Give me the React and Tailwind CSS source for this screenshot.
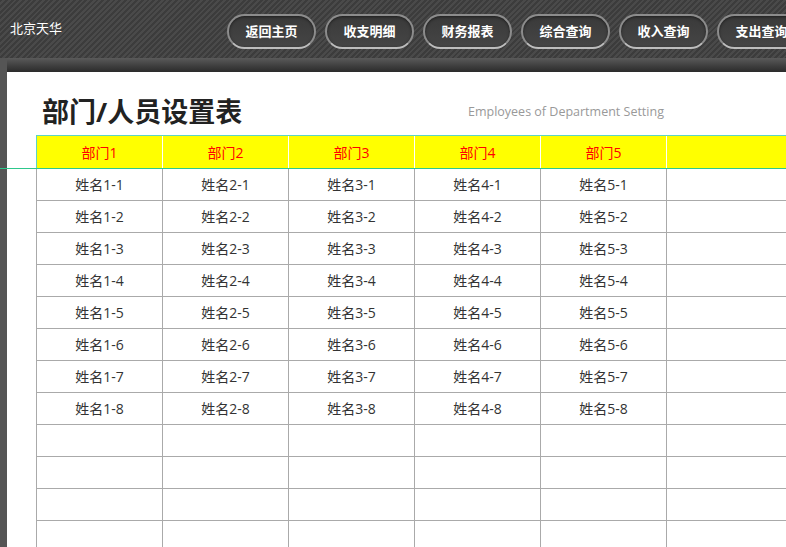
import React from "react";

const navItems = ["返回主页", "收支明细", "财务报表", "综合查询", "收入查询", "支出查询"];
const depts = ["部门1", "部门2", "部门3", "部门4", "部门5", ""];

const App = () => {
  const rows = [];
  for (let r = 1; r <= 12; r++) {
    rows.push(
      depts.map((d, i) => (r <= 8 && i < 5 ? `姓名${i + 1}-${r}` : ""))
    );
  }

  return (
    <div className="relative w-[786px] h-[547px] overflow-hidden bg-white font-['Open_Sans','Noto_Sans_CJK_SC',sans-serif]">
      {/* Top header */}
      <div className="h-[58px] flex items-start bg-[repeating-linear-gradient(135deg,#3c3c3c_0px,#3c3c3c_2px,#4a4a4a_2px,#4a4a4a_4px)]">
        <div className="w-[227px] shrink-0 pl-[10px] pt-[19px] text-[13px] leading-[18px] text-white">
          北京天华
        </div>
        <div className="flex gap-[9px] pt-[14px]">
          {navItems.map((item) => (
            <div
              key={item}
              className="w-[89px] h-[35px] shrink-0 rounded-full border-2 border-[#8c8c8c] border-b-[#bdbdbd] bg-gradient-to-b from-[#3a3a3a] to-[#454545] shadow-[inset_0_1px_3px_rgba(0,0,0,0.5)] flex items-center justify-center text-[13px] font-bold text-white"
            >
              {item}
            </div>
          ))}
        </div>
      </div>

      <div className="flex h-[489px] overflow-hidden">
        {/* left strip */}
        <div className="w-[7px] shrink-0 bg-[#555555]" />
        <div className="flex-1 flex flex-col">
          {/* dark bar */}
          <div className="h-[14px] shrink-0 bg-gradient-to-b from-[#5a5a5a] to-[#2b2b2b]" />

          {/* content */}
          <div className="pt-[20px] shrink-0">
            <div className="h-[40px] flex items-center">
              <div className="w-[461px] shrink-0 pl-[35px] text-[27px] font-bold text-[#222] leading-[34px]">
                部门/人员设置表
              </div>
              <div className="text-[12.5px] text-[#999999]">Employees of Department Setting</div>
            </div>

            <div className="mt-[3px] ml-[29px] w-[800px]">
              {/* header row */}
              <div className="flex h-[34px] border-t border-b border-l border-t-[#5cd4c4] border-l-[#5cd4c4] border-b-[#2ec88c] bg-[#ffff00]">
                {depts.map((d, i) => (
                  <div
                    key={i}
                    className="w-[126px] shrink-0 border-r border-white flex items-center justify-center text-[14px] text-[#ff0000]"
                  >
                    {d}
                  </div>
                ))}
              </div>
              {/* body rows */}
              {rows.map((row, r) => (
                <div key={r} className="flex h-[32px] border-l border-[#aaaaaa]">
                  {row.map((cell, i) => (
                    <div
                      key={i}
                      className="w-[126px] shrink-0 border-r border-b border-[#aaaaaa] flex items-center justify-center text-[14px] text-[#333333]"
                    >
                      {cell}
                    </div>
                  ))}
                </div>
              ))}
            </div>
          </div>
        </div>
      </div>

      {/* green line crossing left strip */}
      <div className="absolute left-0 top-[168px] w-[37px] h-px bg-[#2ec88c]" />
    </div>
  );
};

export default App;
